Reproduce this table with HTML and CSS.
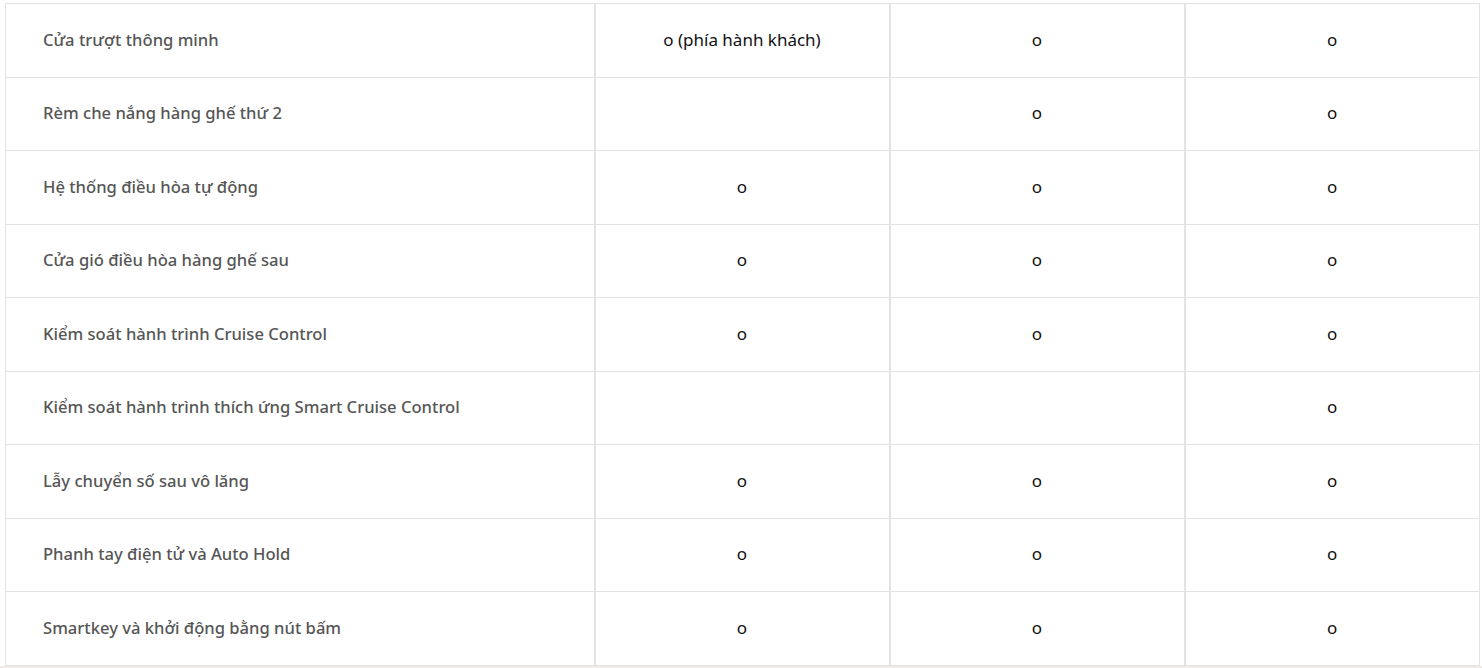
FILE: index.html
```html
<!DOCTYPE html>
<html lang="vi">
<head>
<meta charset="utf-8">
<link rel="stylesheet" href="styles.css">
</head>
<body>
<div class="wrap">
<table class="spec">
<colgroup><col class="c-label"><col class="c-val"><col class="c-val"><col class="c-val"></colgroup>
<tbody>
<tr><td>Cửa trượt thông minh</td><td>o (phía hành khách)</td><td>o</td><td>o</td></tr>
<tr><td>Rèm che nắng hàng ghế thứ 2</td><td></td><td>o</td><td>o</td></tr>
<tr><td>Hệ thống điều hòa tự động</td><td>o</td><td>o</td><td>o</td></tr>
<tr><td>Cửa gió điều hòa hàng ghế sau</td><td>o</td><td>o</td><td>o</td></tr>
<tr><td>Kiểm soát hành trình Cruise Control</td><td>o</td><td>o</td><td>o</td></tr>
<tr><td>Kiểm soát hành trình thích ứng Smart Cruise Control</td><td></td><td></td><td>o</td></tr>
<tr><td>Lẫy chuyển số sau vô lăng</td><td>o</td><td>o</td><td>o</td></tr>
<tr><td>Phanh tay điện tử và Auto Hold</td><td>o</td><td>o</td><td>o</td></tr>
<tr><td>Smartkey và khởi động bằng nút bấm</td><td>o</td><td>o</td><td>o</td></tr>
</tbody>
</table>
</div>
<div class="footer-band"></div>
</body>
</html>
```
FILE: styles.css
```css
html, body {
  margin: 0;
  padding: 0;
  background: #ffffff;
}
.wrap {
  padding: 3px 3px 0 5px;
}
.spec {
  width: 1474px;
  border-collapse: collapse;
  table-layout: fixed;
  font-family: "Noto Sans", "Liberation Sans", sans-serif;
}
.c-label { width: 589px; }
.c-val { width: 295px; }
.spec td {
  height: 73.5px;
  box-sizing: border-box;
  padding: 0 0 2px 0;
  border-top: 1px solid #e3e3e3;
  border-bottom: 1px solid #e3e3e3;
  border-left: 2px solid #e3e3e3;
  text-align: center;
  vertical-align: middle;
  color: #111111;
  font-size: 17px;
}
.spec td:first-child {
  border-left: 1px solid #e3e3e3;
  text-align: left;
  padding-left: 37px;
  color: #565656;
  font-weight: 500;
  font-size: 16.6px;
}
.spec td:last-child {
  border-right: 1px solid #e3e3e3;
}
.footer-band {
  height: 10px;
  background: #efebe4;
}
```
